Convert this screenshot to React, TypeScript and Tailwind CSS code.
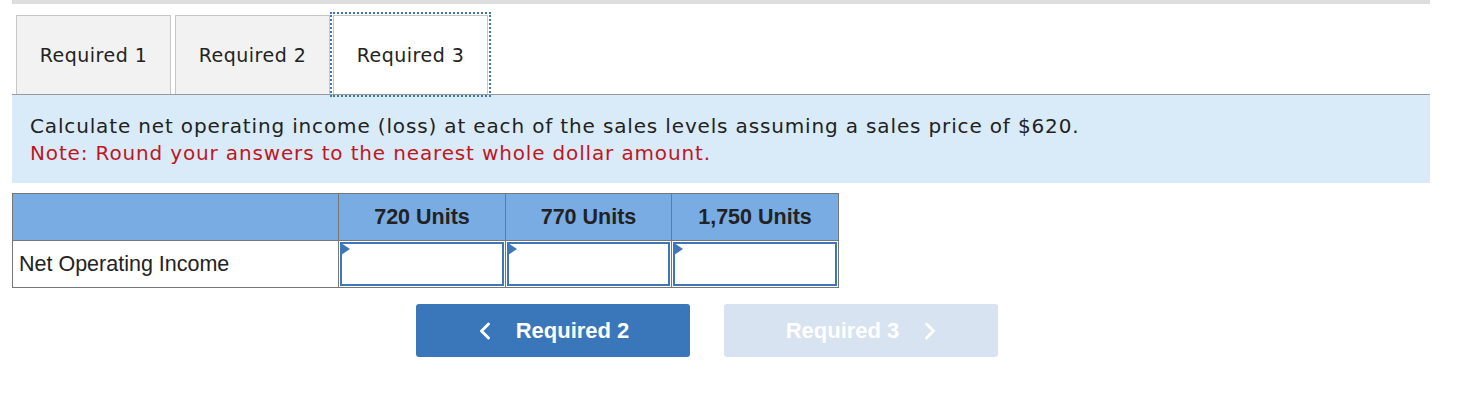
import { ChevronLeft, ChevronRight } from 'lucide-react';

const verdana = { fontFamily: '"DejaVu Sans", Verdana, sans-serif' };
const arial = { fontFamily: '"Liberation Sans", Arial, sans-serif' };

function AnswerCell() {
    return (
        <td className="border border-[#777777] p-px align-top">
            <div className="relative h-[44px] border-2 border-[#3f76ba] bg-white">
                <div className="absolute -left-px -top-px h-0 w-0 border-y-[6px] border-l-[9px] border-y-transparent border-l-[#3f76ba]" />
            </div>
        </td>
    );
}

export default function App() {
    const tabs = ["Required 1", "Required 2"];
    const cols = [
        { label: "720 Units", w: "w-[167px]" },
        { label: "770 Units", w: "w-[166px]" },
        { label: "1,750 Units", w: "w-[167px]" },
    ];

    return (
        <main className="min-h-screen bg-white pl-3">
            <div className="w-[1418px]">
                <div className="h-1 bg-[#dddddd]" />

                <div className="flex items-end gap-1 border-b border-[#999999] pl-1 pt-[11px] text-[19px] tracking-[0.5px] text-[#222222]" style={verdana}>
                    {tabs.map((t) => (
                        <div key={t} className="flex h-[79px] w-[155px] items-center justify-center border border-b-0 border-[#c6c6c6] bg-[#f2f2f2]">
                            {t}
                        </div>
                    ))}
                    <div className="ml-[-1px] flex h-[79px] w-[155px] items-center justify-center border border-b-0 border-[#c6c6c6] bg-white outline-2 outline-offset-[1px] outline-dotted outline-[#3a77c0]">
                        Required 3
                    </div>
                </div>

                <div className="bg-[#d9ebf9] px-[18px] pb-[16px] pt-[18px] text-[20px] leading-[27px] tracking-[0.85px]" style={verdana}>
                    <p className="text-[#222222]">Calculate net operating income (loss) at each of the sales levels assuming a sales price of $620.</p>
                    <p className="text-[#c0161d]">Note: Round your answers to the nearest whole dollar amount.</p>
                </div>

                <table className="mt-[10px] border-collapse text-[21.5px] text-[#222222]" style={arial}>
                    <thead>
                        <tr className="h-[47px] bg-[#78ace3]">
                            <th className="w-[326px] border border-[#777777]" />
                            {cols.map((c) => (
                                <th key={c.label} className={`${c.w} border border-[#777777] font-bold`}>{c.label}</th>
                            ))}
                        </tr>
                    </thead>
                    <tbody>
                        <tr className="h-[47px]">
                            <td className="border border-[#777777] px-[6px] text-left">Net Operating Income</td>
                            <AnswerCell />
                            <AnswerCell />
                            <AnswerCell />
                        </tr>
                    </tbody>
                </table>

                <div className="mt-[16px] flex gap-[34px] pl-[404px] text-[22px] font-bold text-white" style={arial}>
                    <button className="flex h-[53px] w-[274px] items-center justify-center gap-[17px] rounded-[3px] bg-[#3a76ba] pr-[6px]">
                        <ChevronLeft size={28} strokeWidth={2.5} />
                        <span>Required 2</span>
                    </button>
                    <button className="flex h-[53px] w-[274px] items-center justify-center gap-[17px] rounded-[3px] bg-[#d7e3f0] pl-[8px]">
                        <span>Required 3</span>
                        <ChevronRight size={28} strokeWidth={2.5} />
                    </button>
                </div>
            </div>
        </main>
    );
}
